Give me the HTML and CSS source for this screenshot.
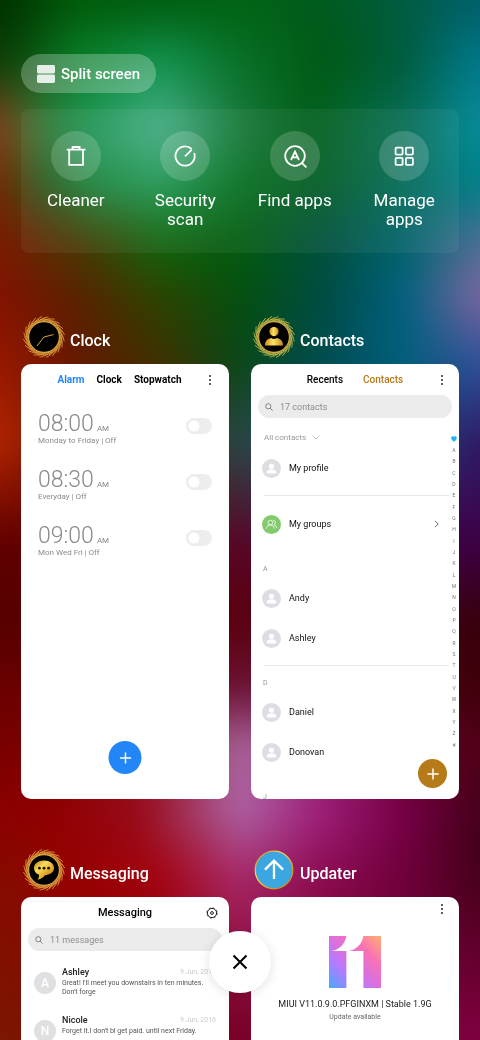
FILE: index.html
```html
<!DOCTYPE html>
<html lang="en">
<head>
<meta charset="utf-8">
<meta name="viewport" content="width=device-width, initial-scale=1">
<title>Recent apps</title>
<link rel="stylesheet" href="styles.css">
</head>
<body>
<svg class="defs" aria-hidden="true">
  <defs>
    <linearGradient id="gold" x1="0" y1="0" x2="1" y2="1">
      <stop offset="0" stop-color="#b97a16"/><stop offset=".35" stop-color="#fbdc5c"/><stop offset=".65" stop-color="#e0a62a"/><stop offset="1" stop-color="#b87818"/>
    </linearGradient>
    <linearGradient id="goldbar" x1="0" y1="0" x2="1" y2="0">
      <stop offset="0" stop-color="#c98f1c"/><stop offset=".45" stop-color="#ffe566"/><stop offset="1" stop-color="#c4881a"/>
    </linearGradient>
    <symbol id="leaf" viewBox="0 0 42 42" overflow="visible">
      <path d="M15.500 4.800Q20 1.400 25.500 .8M16 5.800Q21 3.200 27.500 3.600M17 3.200Q21 4 25 6.200" fill="none" stroke="currentColor" stroke-width=".8"/>
    </symbol>
    <symbol id="wreath" viewBox="0 0 42 42">
      <g id="spray">
        <use href="#leaf"/>
        <use href="#leaf" transform="rotate(18 21 21)"/>
        <use href="#leaf" transform="rotate(36 21 21)"/>
        <use href="#leaf" transform="rotate(54 21 21)"/>
        <use href="#leaf" transform="rotate(72 21 21)"/>
      </g>
      <use href="#spray" transform="rotate(90 21 21)"/>
      <use href="#spray" transform="rotate(180 21 21)"/>
      <use href="#spray" transform="rotate(270 21 21)"/>
      <circle cx="21" cy="21" r="15.400" fill="#020202" stroke="#dcae40" stroke-width="1.100"/>
    </symbol>
    <symbol id="dots" viewBox="0 0 4 12"><circle cx="2" cy="2" r=".9"/><circle cx="2" cy="6" r=".9"/><circle cx="2" cy="10" r=".9"/></symbol>
    <symbol id="plus" viewBox="0 0 14 14"><path d="M7 1.400v11.200M1.400 7h11.200" fill="none" stroke="#fff" stroke-width="1.500"/></symbol>
    <symbol id="lens" viewBox="0 0 8 8"><g fill="none" stroke="#777" stroke-width=".9"><circle cx="3.300" cy="3.300" r="2.600"/><path d="M5.200 5.200l2.400 2.400"/></g></symbol>
    <symbol id="person" viewBox="0 0 20 20"><circle cx="10" cy="10" r="10" fill="#dcdee4"/><circle cx="10" cy="7.600" r="2.700" fill="#fff"/><path d="M4.900 14.200c0-2.200 1.800-3.200 3.300-3.200h3.600c1.500 0 3.300 1 3.300 3.200 0 .7-.5 1-1.100 1H6c-.6 0-1.100-.3-1.100-1z" fill="#fff"/></symbol>
  </defs>
</svg>

<div class="wallpaper" aria-hidden="true">
  <div class="band b1"></div><div class="band b2"></div><div class="band b3"></div><div class="band b4"></div>
  <div class="band b5"></div><div class="band b6"></div><div class="band b7"></div><div class="band b8"></div>
  <div class="band b9"></div><div class="band b10"></div><div class="band b11"></div><div class="band b12"></div>
  <div class="band b13"></div><div class="band b14"></div><div class="band b15"></div>
</div>

<main class="screen">
  <button class="split" type="button">
    <svg width="18" height="18" viewBox="0 0 18 18"><rect width="18" height="8.400" rx="1.400" fill="#fff" fill-opacity=".86"/><rect y="9.600" width="18" height="8.400" rx="1.400" fill="#fff" fill-opacity=".86"/></svg>
    Split screen
  </button>

  <nav class="tools">
    <button class="tool" type="button">
      <span class="disc"><svg width="24" height="24" viewBox="0 0 24 24"><path d="M2.800 5.600h18.600M8.600 5.400V3h7v2.400M5.200 5.800v15h13.800v-15"/></svg></span>
      <span>Cleaner</span>
    </button>
    <button class="tool" type="button">
      <span class="disc"><svg width="24" height="24" viewBox="0 0 24 24"><path d="M18.600 5A9.600 9.600 0 1 0 21.200 9M12 12.400l6.800-6.800"/></svg></span>
      <span>Security scan</span>
    </button>
    <button class="tool" type="button">
      <span class="disc"><svg width="24" height="24" viewBox="0 0 24 24"><circle cx="12" cy="12" r="9.800"/><path d="M18.800 18.800l4.600 4.600M8 16l4-8.400L16 16M9.400 13.400h5.200"/></svg></span>
      <span>Find apps</span>
    </button>
    <button class="tool" type="button">
      <span class="disc"><svg width="24" height="24" viewBox="0 0 24 24"><rect x="3.600" y="3.600" width="7" height="7" rx="1"/><rect x="13.900" y="3.600" width="7" height="7" rx="1"/><rect x="3.600" y="13.900" width="7" height="7" rx="1"/><rect x="13.900" y="13.900" width="7" height="7" rx="1"/></svg></span>
      <span>Manage apps</span>
    </button>
  </nav>

  <div class="recents">
    <section class="app">
      <header class="app-head">
        <svg class="app-icon amber" viewBox="0 0 42 42"><use href="#wreath"/><path d="M14 30l7-9 9.500-2.400" fill="none" stroke="#d9a63a" stroke-width="1"/></svg>
        <h2>Clock</h2>
      </header>
      <div class="card">
        <div class="bar clock-bar">
          <div class="tabs"><a class="blue" href="#alarm">Alarm</a><a href="#clock">Clock</a><a href="#stopwatch">Stopwatch</a></div>
          <button class="more" type="button" aria-label="More"><svg width="4" height="12"><use href="#dots"/></svg></button>
        </div>
        <div class="alarms">
          <label class="alarm"><span><span class="time">08:00<small>AM</small></span><span class="days">Monday to Friday | Off</span></span><input type="checkbox"></label>
          <label class="alarm"><span><span class="time">08:30<small>AM</small></span><span class="days">Everyday | Off</span></span><input type="checkbox"></label>
          <label class="alarm"><span><span class="time">09:00<small>AM</small></span><span class="days">Mon Wed Fri | Off</span></span><input type="checkbox"></label>
        </div>
        <button class="fab fab-blue" type="button" aria-label="Add alarm"><svg width="14" height="14"><use href="#plus"/></svg></button>
      </div>
    </section>

    <section class="app">
      <header class="app-head">
        <svg class="app-icon olive" viewBox="0 0 42 42"><use href="#wreath"/><circle cx="21" cy="15.600" r="4.600" fill="url(#goldbar)"/><path d="M12 29.600c0-4.600 2-6.600 6.200-7.600 1.600 1.400 4 1.400 5.600 0 4.200 1 6.200 3 6.200 7.600z" fill="url(#goldbar)"/></svg>
        <h2>Contacts</h2>
      </header>
      <div class="card">
        <div class="bar">
          <div class="tabs wide"><a href="#recents">Recents</a><a class="brown" href="#contacts">Contacts</a></div>
          <button class="more" type="button" aria-label="More"><svg width="4" height="12"><use href="#dots"/></svg></button>
        </div>
        <label class="search"><svg width="8" height="8"><use href="#lens"/></svg><input type="search" placeholder="17 contacts" aria-label="Search contacts"></label>
        <div class="book">
          <div class="people">
            <button class="filter" type="button">All contacts <svg width="8" height="5" viewBox="0 0 8 5"><path d="M.5.5L4 4 7.500.5" fill="none" stroke="#aaa" stroke-width=".7"/></svg></button>
            <a class="person" href="#profile"><svg class="face"><use href="#person"/></svg>My profile</a>
            <hr>
            <a class="person" href="#groups"><svg class="face" viewBox="0 0 20 20"><circle cx="10" cy="10" r="10" fill="#82cb6c"/><g fill="none" stroke="#fff" stroke-width=".8"><circle cx="8.800" cy="8" r="2.500"/><path d="M4.600 14.400c.2-2.600 1.800-3.900 4.200-3.900s4 1.300 4.200 3.900M11.700 5.600c2.700-.2 3.200 3.800.8 4.600 1.900.4 2.900 1.800 3 3.600"/></g></svg>My groups<svg class="chev" width="5" height="8" viewBox="0 0 5 8"><path d="M1 .800L4.200 4 1 7.200" fill="none" stroke="#555" stroke-width=".9"/></svg></a>
            <h3 class="first">A</h3>
            <a class="person" href="#andy"><svg class="face"><use href="#person"/></svg>Andy</a>
            <a class="person" href="#ashley"><svg class="face"><use href="#person"/></svg>Ashley</a>
            <hr>
            <h3>D</h3>
            <a class="person" href="#daniel"><svg class="face"><use href="#person"/></svg>Daniel</a>
            <a class="person" href="#donovan"><svg class="face"><use href="#person"/></svg>Donovan</a>
            <h3 class="last">J</h3>
          </div>
          <nav class="index" aria-label="Index">
            <a href="#fav" aria-label="Favourites"><svg width="6" height="6" viewBox="0 0 6 6"><path d="M3 5.700C-1.200 3 .2.300 1.700.300 2.400.300 3 .900 3 1.200 3 .900 3.600.300 4.300.300 5.800.300 7.200 3 3 5.700z" fill="#1fb6f0"/></svg></a>
            <a href="#A">A</a><a href="#B">B</a><a href="#C">C</a><a href="#D">D</a><a href="#E">E</a><a href="#F">F</a><a href="#G">G</a><a href="#H">H</a><a href="#I">I</a><a href="#J">J</a><a href="#K">K</a><a href="#L">L</a><a href="#M">M</a><a href="#N">N</a><a href="#O">O</a><a href="#P">P</a><a href="#Q">Q</a><a href="#R">R</a><a href="#S">S</a><a href="#T">T</a><a href="#U">U</a><a href="#V">V</a><a href="#W">W</a><a href="#X">X</a><a href="#Y">Y</a><a href="#Z">Z</a><a href="#num">#</a>
          </nav>
        </div>
        <button class="fab fab-brown" type="button" aria-label="Add contact"><svg width="14" height="14"><use href="#plus"/></svg></button>
      </div>
    </section>

    <section class="app">
      <header class="app-head">
        <svg class="app-icon amber" viewBox="0 0 42 42"><use href="#wreath"/><path d="M21 11.400c6 0 10 3.200 10 7.600 0 5-5 6.800-9 7.200-2 2.400-4.600 4-7.600 4.400 1.400-1.400 1.800-3 1.600-4.800-3-1-5-3.600-5-6.800 0-4.400 4-7.600 10-7.600z" fill="url(#gold)"/><g fill="#1a1200"><circle cx="16.400" cy="19.200" r="1.400"/><circle cx="21" cy="19.200" r="1.400"/><circle cx="25.600" cy="19.200" r="1.400"/></g></svg>
        <h2>Messaging</h2>
      </header>
      <div class="card">
        <div class="bar">
          <h3 class="title">Messaging</h3>
          <button class="gear" type="button" aria-label="Settings"><svg width="12" height="12" viewBox="0 0 12 12"><g fill="none" stroke="#222"><circle cx="6" cy="6" r="4.600" stroke-width="1"/><circle cx="6" cy="6" r="5.200" stroke-width=".8" stroke-dasharray="2.040 2.040"/><circle cx="6" cy="6" r="1.400" stroke-width="1"/></g></svg></button>
        </div>
        <label class="search"><svg width="8" height="8"><use href="#lens"/></svg><input type="search" placeholder="11 messages" aria-label="Search messages"></label>
        <div class="threads">
          <a class="thread" href="#t1"><span class="initial">A</span><span class="body"><span class="who"><b>Ashley</b><time>9 Jun, 2016</time></span><span class="text">Great! I'll meet you downstairs in ten minutes. Don't forge</span></span></a>
          <a class="thread" href="#t2"><span class="initial">N</span><span class="body"><span class="who"><b>Nicole</b><time>9 Jun, 2016</time></span><span class="text">Forget it.I don't bl get paid. until next Friday.</span></span></a>
        </div>
      </div>
    </section>

    <section class="app">
      <header class="app-head">
        <svg class="app-icon" viewBox="0 0 42 42"><circle cx="21" cy="21" r="18.800" fill="#3ba6df" stroke="url(#gold)" stroke-width="1.300"/><path d="M21 30V12M12 20.600l9-9 9 9" fill="none" stroke="#fff" stroke-width="2.300"/></svg>
        <h2>Updater</h2>
      </header>
      <div class="card">
        <div class="bar update-bar">
          <button class="more" type="button" aria-label="More"><svg width="4" height="12"><use href="#dots"/></svg></button>
        </div>
        <div class="update">
          <svg width="52" height="52" viewBox="0 0 52 52">
            <defs><linearGradient id="eleven" x1="0" y1="1" x2="1" y2="0"><stop offset="0" stop-color="#48a8ff"/><stop offset=".3" stop-color="#b57bff"/><stop offset=".48" stop-color="#d870e0"/><stop offset=".72" stop-color="#fb72b4"/><stop offset="1" stop-color="#ffb070"/></linearGradient></defs>
            <path d="M0 0H17.400C16 8.500 10 14 2 15H17.400V52H0zM34.400 0H52V52H34.400V15H19C27 14 33 8.500 34.400 0z" fill="url(#eleven)"/>
          </svg>
          <p class="version">MIUI V11.0.9.0.PFGINXM | Stable 1.9G</p>
          <p class="state">Update available</p>
        </div>
      </div>
    </section>
  </div>
</main>

<button class="close" type="button" aria-label="Close all"><svg width="16" height="16" viewBox="0 0 16 16"><path d="M1.500 1.500l13 13M14.500 1.500l-13 13" fill="none" stroke="#000" stroke-width="2"/></svg></button>
</body>
</html>
```

FILE: styles.css
```css
* { box-sizing: border-box; }
html { overflow: hidden; }
body { margin: 0; height: 100vh; overflow: hidden; font-family: Roboto, "Noto Sans", sans-serif; color: #000; }
button { border: 0; padding: 0; background: none; font: inherit; color: inherit; cursor: pointer; }
a { color: inherit; text-decoration: none; }
h2, h3, p { margin: 0; font-weight: 500; }
svg { display: block; flex: none; }
.defs { position: absolute; width: 0; height: 0; }

/* Wallpaper: horizontal gradients, each fading in over the one above it */
.wallpaper { position: fixed; inset: -40px; z-index: -1; filter: blur(14px); }
.band { position: absolute; inset: 0; background: linear-gradient(90deg, var(--c)); mask-image: linear-gradient(transparent var(--from), #000 var(--to)); }
.b1 { --c: #003200 8%, #005c0a 21%, #005e12, #006414, #005a1e, #005c40 79%, #00606a 92%; mask-image: none; }
.b2 { --from: 4%; --to: 9%; --c: #0c4008 8%, #088028 21%, #129450 36%, #0a7028 50%, #005a14, #005c3c 79%, #00788a 92%; }
.b3 { --from: 9%; --to: 15%; --c: #84401c 7%, #3c7838 14%, #209858 22%, #4cb08c 36%, #187a3c 50%, #02601a 62%, #08705a 80%, #088c98 92%; }
.b4 { --from: 15%; --to: 20%; --c: #702c04 7%, #285c20 15%, #1c8840 23%, #209a56 36%, #067020 50%, #045c24 64%, #046c5a 80%, #008088 92%; }
.b5 { --from: 20%; --to: 25%; --c: #7c1a02 7%, #483c04 21%, #106810, #045c10, #00503c, #006468 79%, #50709a 94%; }
.b6 { --from: 25%; --to: 30%; --c: #821200 7%, #5a2200 21%, #2c4400, #045010, #004c40, #006080 79%, #8066a0 93%; }
.b7 { --from: 30%; --to: 36%; --c: #981800 7%, #641800 21%, #403000, #0a4818, #004c50, #00607c 79%, #30509a 93%; }
.b8 { --from: 36%; --to: 43%; --c: #b42600 7%, #601000 21%, #402c18, #284848, #205060, #204870 79%, #301868 93%; }
.b9 { --from: 43%; --to: 52%; --c: #600000, #600000, #600010, #580828, #480040, #400048, #3c0044; }
.b10 { --from: 52%; --to: 59%; --c: #560000, #560000, #580008, #5c0010, #500010, #400010, #300008; }
.b11 { --from: 59%; --to: 65%; --c: #6a0000, #6c0000, #700010, #6c1438, #600c20, #480010, #380006; }
.b12 { --from: 65%; --to: 70%; --c: #720000, #800000, #901020 36%, #a8689e 50%, #902468 64%, #680030 79%, #500016 93%; }
.b13 { --from: 70%; --to: 76%; --c: #880000, #900000, #980c1c 32%, #ae64a6 50%, #a0207c 64%, #780048 79%, #440018 93%; }
.b14 { --from: 76%; --to: 82%; --c: #840c00 7%, #980000 21%, #a40410, #a82868, #8c0c50, #70003c 79%, #440018 93%; }
.b15 { --from: 82%; --to: 96%; --c: #7c1800 7%, #780c00, #780008, #780028, #780030, #780038, #800040 93%; }

.screen { padding: 54px 21px 0; }
.split { display: flex; align-items: center; gap: 6px; height: 39px; padding: 0 16px; border-radius: 20px; background: rgba(255, 255, 255, .25); color: #fff; font-size: 15px; font-weight: 500; }

.tools { display: grid; grid-template-columns: repeat(4, 1fr); margin-top: 16px; padding: 22px 0 24px; border-radius: 8px; background: rgba(255, 255, 255, .055); }
.tool { display: flex; flex-direction: column; align-items: center; gap: 10px; padding: 0 20px; color: #fff; font-size: 17px; line-height: 19px; }
.disc { display: grid; place-items: center; width: 50px; height: 50px; border-radius: 50%; background: rgba(255, 255, 255, .17); }
.disc svg { fill: none; stroke: #fff; stroke-width: 1.8; overflow: visible; }
.tool span + span { margin: 0 -8px; }

.recents { display: grid; grid-template-columns: 1fr 1fr; gap: 50px 22px; margin-top: 63px; }
.app { min-width: 0; }
.app-head { display: flex; align-items: center; gap: 5px; padding: 0 2px 6px; color: #fff; }
.app-icon { width: 42px; height: 42px; }
.amber { color: #dc9c3c; }
.olive { color: #c0b448; }
.app-head h2 { padding-top: 8px; font-size: 16px; line-height: 20px; }
.card { position: relative; display: flex; flex-direction: column; aspect-ratio: 208 / 435; border-radius: 10px; background: #fff; overflow: hidden; }

.bar { position: relative; display: flex; align-items: center; justify-content: center; flex: none; height: 31px; }
.tabs { display: flex; gap: 12px; font-size: 10px; font-weight: 700; }
.clock-bar .tabs { margin-right: 11px; }
.tabs.wide { gap: 20px; font-weight: 500; }
.blue { color: #2386f6; }
.brown { color: #b97b18; }
.more, .gear { position: absolute; right: 11px; top: 10px; padding: 0 4px; }
.more { fill: #111; }
.clock-bar .more { right: 13px; }
.update-bar .more { top: 6px; }
.gear { padding: 0; }
.title { font-size: 11px; }

.search { display: flex; align-items: center; gap: 7px; flex: none; height: 23px; margin: 0 7px; padding: 0 7px; border-radius: 12px; background: #ebebeb; }
.search input { flex: 1; min-width: 0; border: 0; padding: 0; outline: 0; background: none; font: 9px Roboto, sans-serif; color: #333; }
.search input::placeholder { color: #8e8e8e; opacity: 1; }

.alarms { padding: 16px 17px 0; }
.alarm { display: flex; align-items: center; justify-content: space-between; height: 56px; padding-bottom: 20px; color: #8a8a8a; }
.alarm input { appearance: none; width: 26px; height: 16px; margin: 0 0 6px; border-radius: 8px; background: radial-gradient(circle at 8px 8px, #fff 5px, #ededed 6px); }
.alarm input:checked { background: radial-gradient(circle at 18px 8px, #fff 5px, #2386f6 6px); }
.time { display: block; font-size: 23px; line-height: 24px; font-weight: 300; }
.time small { margin-left: 3px; font-size: 8px; line-height: 8px; font-weight: 400; }
.days { display: block; font-size: 8px; line-height: 10px; }

.fab { position: absolute; display: grid; place-items: center; border-radius: 50%; }
.fab-blue { left: 50%; bottom: 25px; width: 33px; height: 33px; transform: translateX(-50%); background: #2386f6; }
.fab-brown { right: 12px; bottom: 11px; width: 29px; height: 29px; background: #b67a18; }

.book { display: flex; align-items: flex-start; }
.people { flex: 1; min-width: 0; padding-left: 11px; }
.filter { display: flex; align-items: center; gap: 6px; height: 30px; padding: 9px 0 0 2px; font-size: 8px; color: #999; }
.person { display: flex; align-items: center; gap: 8px; height: 40px; font-size: 9px; color: #111; }
.face { width: 19px; height: 19px; }
.chev { margin: 0 10px 0 auto; }
.people hr { height: 1px; margin: 7px 0 8px 2px; border: 0; background: #e9e9e9; }
.people h3 { height: 17px; padding-left: 1px; font-size: 7px; line-height: 17px; font-weight: 400; color: #8e93a0; }
.people hr + h3 { margin-top: 9px; }
.people .first { margin-top: 17px; }
.people .last { margin-top: 17px; }
.index { display: flex; flex-direction: column; flex: none; width: 10px; height: 317px; margin-top: 15px; }
.index a { display: grid; place-items: center; flex: 1; min-height: 0; font-size: 5px; line-height: 6px; color: #777; }

.threads { padding: 14px 13px 0; }
.thread { display: flex; align-items: flex-start; gap: 6px; height: 48px; }
.initial { display: grid; place-items: center; flex: none; width: 22px; height: 22px; margin-top: 7px; border-radius: 50%; background: #dfe0e2; color: #fff; font-size: 12px; font-weight: 500; }
.body { flex: 1; min-width: 0; }
.who { display: flex; align-items: center; justify-content: space-between; height: 14px; }
.who b { font-size: 9px; font-weight: 500; color: #222; }
.who time { font-size: 7px; color: #ccc; }
.text { display: block; font-size: 7px; line-height: 9px; color: #555; }

.update { display: flex; flex-direction: column; align-items: center; padding-top: 8px; white-space: nowrap; }
.version { margin-top: 10px; font-size: 9px; line-height: 12px; font-weight: 400; color: #222; }
.state { margin-top: 2px; font-size: 7px; line-height: 10px; font-weight: 400; color: #666; }

.close { position: fixed; left: 50%; bottom: 47px; display: grid; place-items: center; width: 62px; height: 62px; border-radius: 50%; background: #fff; box-shadow: 0 2px 12px rgba(0, 0, 0, .12); transform: translateX(-50%); }
```
